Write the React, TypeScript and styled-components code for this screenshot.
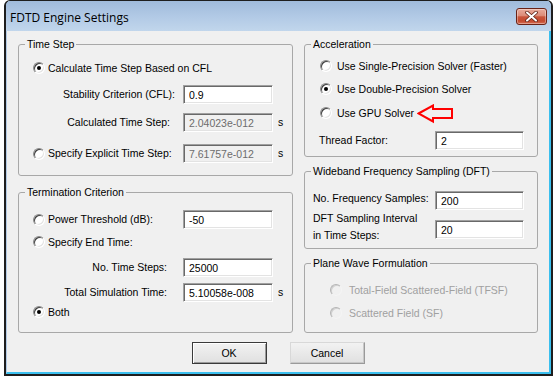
import React from 'react';
import styled, { createGlobalStyle } from 'styled-components';

const FONT = `"Liberation Sans", Arial, sans-serif`;
const SIZE = '10.5px';

const GlobalStyle = createGlobalStyle`
  html, body { margin: 0; padding: 0; background: #ffffff; }
  body { font-family: ${FONT}; font-size: ${SIZE}; line-height: 13px; color: #000; }
  * { box-sizing: border-box; }
`;

const Window = styled.div`
  margin-left: 4px;
  width: 549px;
  height: 376px;
  border: 2px solid #1e1e1e;
  border-top-width: 1px;
  border-radius: 6px 6px 0 0;
  display: flex;
  flex-direction: column;
  overflow: hidden;
  background: #bcd3ea;
`;

const TitleBar = styled.div`
  height: 30px;
  flex: none;
  display: flex;
  align-items: center;
  padding: 0 4px 0 4px;
  background: linear-gradient(180deg, #a0bbdb 0%, #b1c9e5 50%, #c1d6ec 100%);
`;

const TitleText = styled.span`
  font-family: "Segoe UI", "Open Sans", sans-serif;
  font-size: 12px;
  color: #000;
  margin-top: 2px;
`;

const CloseButton = styled.div`
  margin-left: auto;
  width: 31px;
  height: 17px;
  border: 1px solid #6a2216;
  border-radius: 3px;
  display: flex;
  align-items: center;
  justify-content: center;
  background: linear-gradient(180deg, #e9ab9c 0%, #dc8b77 45%, #c9553b 52%, #c44a2f 80%, #d66f55 100%);
  box-shadow: inset 0 0 0 1px rgba(255, 255, 255, 0.35);
`;

const Client = styled.div`
  flex: 1;
  background: #f0f0f0;
  border-left: 1px solid #b3cbe6;
  border-right: 2px solid #3bbfee;
  border-bottom: 2px solid #3bbfee;
  padding: 13px 11px 0 11px;
  display: flex;
  flex-direction: column;
`;

const Columns = styled.div`
  display: grid;
  grid-template-columns: 275px 234px;
  column-gap: 11px;
`;

const Column = styled.div<{ $gap: number }>`
  display: flex;
  flex-direction: column;
  gap: ${p => p.$gap}px;
`;

const Group = styled.div<{ $h: number }>`
  position: relative;
  height: ${p => p.$h}px;
  border: 1px solid #a8a8a8;
  border-radius: 3px;
`;

const Legend = styled.span`
  position: absolute;
  top: -7px;
  left: 6px;
  padding: 0 2px;
  background: #f0f0f0;
  line-height: 13px;
  white-space: nowrap;
`;

const GroupBody = styled.div<{ $pt: number }>`
  padding-top: ${p => p.$pt}px;
  display: flex;
  flex-direction: column;
`;

const OptionRow = styled.div<{ $mt?: number; $pl: number }>`
  height: 16px;
  margin-top: ${p => p.$mt ?? 0}px;
  padding-left: ${p => p.$pl}px;
  display: flex;
  align-items: center;
`;

const FieldRow = styled.div<{ $mt?: number; $cols: string }>`
  display: grid;
  grid-template-columns: ${p => p.$cols};
  align-items: center;
  height: 19px;
  margin-top: ${p => p.$mt ?? 0}px;
`;

const TallRow = styled.div<{ $cols: string }>`
  display: grid;
  grid-template-columns: ${p => p.$cols};
  align-items: start;
`;

const FieldLabel = styled.span<{ $pr?: number; $pl?: number; $right?: boolean; $lift?: number }>`
  white-space: nowrap;
  text-align: ${p => (p.$right ? 'right' : 'left')};
  padding-right: ${p => p.$pr ?? 0}px;
  padding-left: ${p => p.$pl ?? 0}px;
  margin-bottom: ${p => (p.$lift ?? 0) * 2}px;
`;

const MultiLabel = styled.span<{ $pl: number }>`
  padding-left: ${p => p.$pl}px;
  line-height: 17px;
`;

const RadioCell = styled.div<{ $pl: number }>`
  padding-left: ${p => p.$pl}px;
  display: flex;
  align-items: center;
`;

const RadioOption = styled.label<{ $gap: number; $disabled?: boolean }>`
  display: flex;
  align-items: center;
  gap: ${p => p.$gap}px;
  white-space: nowrap;
  color: ${p => (p.$disabled ? '#a0a0a0' : '#000')};
`;

const Radio = styled.span<{ $checked?: boolean; $disabled?: boolean }>`
  position: relative;
  flex: none;
  width: 12px;
  height: 12px;
  border-radius: 50%;
  border: 1px solid;
  border-color: ${p => (p.$disabled ? '#b4b4b4 #f4f4f4 #f4f4f4 #b4b4b4' : '#8a8a8a #ffffff #ffffff #8a8a8a')};
  background: ${p => (p.$disabled ? '#f0f0f0' : '#ffffff')};
  box-shadow: inset 1px 1px 0 ${p => (p.$disabled ? '#d0d0d0' : '#404040')},
    inset -1px -1px 0 ${p => (p.$disabled ? '#f0f0f0' : '#e3e3e3')};
  &::after {
    content: '';
    display: ${p => (p.$checked ? 'block' : 'none')};
    position: absolute;
    left: 3px;
    top: 3px;
    width: 4px;
    height: 4px;
    border-radius: 50%;
    background: #000;
  }
`;

const TextBox = styled.input<{ $mt?: number }>`
  height: 19px;
  width: 100%;
  margin: ${p => p.$mt ?? 0}px 0 0 0;
  padding: 0 0 0 5px;
  font: ${SIZE} ${FONT};
  color: #000;
  background: #ffffff;
  border: 1px solid;
  border-color: #a0a0a0 #ffffff #ffffff #a0a0a0;
  box-shadow: inset 1px 1px 0 #696969, inset -1px -1px 0 #e3e3e3;
  border-radius: 0;
  outline: none;
  &:disabled {
    background: #f0f0f0;
    color: #6d6d6d;
  }
`;

const Unit = styled.span`
  padding-left: 5px;
`;

const ArrowMark = styled.svg`
  position: absolute;
  left: 112px;
  top: 59px;
`;

const ButtonRow = styled.div`
  display: flex;
  justify-content: center;
  gap: 23px;
  margin-top: 9px;
`;

const DialogButton = styled.button<{ $default?: boolean }>`
  width: 75px;
  height: 22px;
  padding: 0;
  font: ${SIZE} ${FONT};
  color: #000;
  border: 1px solid;
  border-color: ${p => (p.$default ? '#3a3a3a' : '#d8d8d8 #9a9a9a #9a9a9a #d8d8d8')};
  box-shadow: ${p => (p.$default ? 'inset 1px 1px 0 #ffffff, inset -1px -1px 0 #9a9a9a' : 'inset -1px -1px 0 #c8c8c8')};
  background: linear-gradient(180deg, #f2f2f2 0%, #e9e9e9 50%, #e0e0e0 100%);
`;

const LEFT_COLS = '164px 90px auto';

export default function App() {
  return (
    <>
      <GlobalStyle />
      <Window>
        <TitleBar>
          <TitleText>FDTD Engine Settings</TitleText>
          <CloseButton>
            <svg width="13" height="11" viewBox="0 0 13 11">
              <path d="M2 1.5 L11 9.5 M11 1.5 L2 9.5" stroke="#5e2418" strokeWidth="3.6" strokeLinecap="round" />
              <path d="M2 1.5 L11 9.5 M11 1.5 L2 9.5" stroke="#ffffff" strokeWidth="2" strokeLinecap="round" />
            </svg>
          </CloseButton>
        </TitleBar>
        <Client>
          <Columns>
            <Column $gap={16}>
              <Group $h={132}>
                <Legend>Time Step</Legend>
                <GroupBody $pt={15}>
                  <OptionRow $pl={14}>
                    <RadioOption $gap={3}>
                      <Radio $checked />
                      Calculate Time Step Based on CFL
                    </RadioOption>
                  </OptionRow>
                  <FieldRow $mt={9} $cols={LEFT_COLS}>
                    <FieldLabel $right $pr={8}>Stability Criterion (CFL):</FieldLabel>
                    <TextBox defaultValue="0.9" />
                  </FieldRow>
                  <FieldRow $mt={9} $cols={LEFT_COLS}>
                    <FieldLabel $right $pr={13}>Calculated Time Step:</FieldLabel>
                    <TextBox disabled value="2.04023e-012" readOnly />
                    <Unit>s</Unit>
                  </FieldRow>
                  <FieldRow $mt={12} $cols={LEFT_COLS}>
                    <RadioCell $pl={14}>
                      <RadioOption $gap={3}>
                        <Radio />
                        Specify Explicit Time Step:
                      </RadioOption>
                    </RadioCell>
                    <TextBox disabled value="7.61757e-012" readOnly />
                    <Unit>s</Unit>
                  </FieldRow>
                </GroupBody>
              </Group>
              <Group $h={141}>
                <Legend>Termination Criterion</Legend>
                <GroupBody $pt={17}>
                  <FieldRow $cols={LEFT_COLS}>
                    <RadioCell $pl={14}>
                      <RadioOption $gap={3}>
                        <Radio />
                        Power Threshold (dB):
                      </RadioOption>
                    </RadioCell>
                    <TextBox defaultValue="-50" />
                  </FieldRow>
                  <OptionRow $mt={5} $pl={14}>
                    <RadioOption $gap={3}>
                      <Radio />
                      Specify End Time:
                    </RadioOption>
                  </OptionRow>
                  <FieldRow $mt={8} $cols={LEFT_COLS}>
                    <FieldLabel $right $pr={16}>No. Time Steps:</FieldLabel>
                    <TextBox defaultValue="25000" />
                  </FieldRow>
                  <FieldRow $mt={6} $cols={LEFT_COLS}>
                    <FieldLabel $right $pr={16}>Total Simulation Time:</FieldLabel>
                    <TextBox defaultValue="5.10058e-008" />
                    <Unit>s</Unit>
                  </FieldRow>
                  <OptionRow $mt={2} $pl={14}>
                    <RadioOption $gap={3}>
                      <Radio $checked />
                      Both
                    </RadioOption>
                  </OptionRow>
                </GroupBody>
              </Group>
            </Column>
            <Column $gap={14}>
              <Group $h={113}>
                <Legend>Acceleration</Legend>
                <GroupBody $pt={13}>
                  <OptionRow $pl={15}>
                    <RadioOption $gap={5}>
                      <Radio />
                      Use Single-Precision Solver (Faster)
                    </RadioOption>
                  </OptionRow>
                  <OptionRow $mt={7} $pl={15}>
                    <RadioOption $gap={5}>
                      <Radio $checked />
                      Use Double-Precision Solver
                    </RadioOption>
                  </OptionRow>
                  <OptionRow $mt={8} $pl={15}>
                    <RadioOption $gap={5}>
                      <Radio />
                      Use GPU Solver
                    </RadioOption>
                  </OptionRow>
                  <FieldRow $mt={10} $cols="130px 89px">
                    <FieldLabel $pl={14}>Thread Factor:</FieldLabel>
                    <TextBox defaultValue="2" />
                  </FieldRow>
                </GroupBody>
                <ArrowMark width="38" height="20" viewBox="0 0 38 20">
                  <polygon
                    points="1.5,9.5 16,1.5 16,5 35,5 35,14 16,14 16,17.5"
                    fill="none"
                    stroke="#ff0000"
                    strokeWidth="2"
                    strokeLinejoin="miter"
                  />
                </ArrowMark>
              </Group>
              <Group $h={78}>
                <Legend>Wideband Frequency Sampling (DFT)</Legend>
                <GroupBody $pt={19}>
                  <FieldRow $cols="130px 89px">
                    <FieldLabel $pl={8} $lift={2}>No. Frequency Samples:</FieldLabel>
                    <TextBox defaultValue="200" />
                  </FieldRow>
                  <TallRow $cols="130px 89px">
                    <MultiLabel $pl={8}>
                      DFT Sampling Interval
                      <br />
                      in Time Steps:
                    </MultiLabel>
                    <TextBox $mt={10} defaultValue="20" />
                  </TallRow>
                </GroupBody>
              </Group>
              <Group $h={70}>
                <Legend>Plane Wave Formulation</Legend>
                <GroupBody $pt={18}>
                  <OptionRow $pl={25}>
                    <RadioOption $gap={7} $disabled>
                      <Radio $disabled />
                      Total-Field Scattered-Field (TFSF)
                    </RadioOption>
                  </OptionRow>
                  <OptionRow $mt={7} $pl={25}>
                    <RadioOption $gap={7} $disabled>
                      <Radio $disabled />
                      Scattered Field (SF)
                    </RadioOption>
                  </OptionRow>
                </GroupBody>
              </Group>
            </Column>
          </Columns>
          <ButtonRow>
            <DialogButton $default>OK</DialogButton>
            <DialogButton>Cancel</DialogButton>
          </ButtonRow>
        </Client>
      </Window>
    </>
  );
}
